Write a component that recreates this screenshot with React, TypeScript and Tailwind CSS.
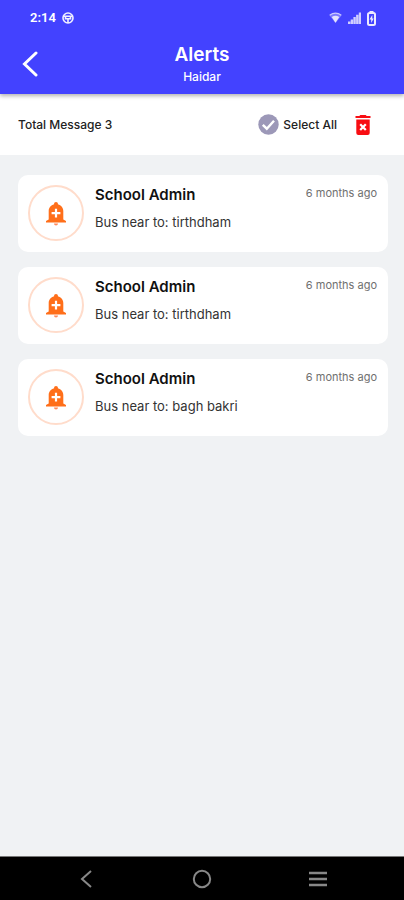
import React, { useState } from 'react';

interface AlertItem {
  id: number;
  sender: string;
  message: string;
  time: string;
}

const initialAlerts: AlertItem[] = [
  { id: 1, sender: 'School Admin', message: 'Bus near to: tirthdham', time: '6 months ago' },
  { id: 2, sender: 'School Admin', message: 'Bus near to: tirthdham', time: '6 months ago' },
  { id: 3, sender: 'School Admin', message: 'Bus near to: bagh bakri', time: '6 months ago' },
];

const BellPlusIcon = () => (
  <svg viewBox="0 0 20 24" className="h-6 w-5" aria-hidden="true">
    <path
      fill="#ff6f1a"
      d="M10 0c1.100 0 1.900 0.800 1.900 1.800v0.400c3.300 0.800 5.400 3.500 5.400 6.800v8.500l2.700 1.500v1.500H0V19l2.700-1.500V9c0-3.300 2.100-6 5.400-6.800V1.800C8.100 0.800 8.900 0 10 0z"
    />
    <path fill="#ff8a5c" d="M8 21.500h4c0 1.200-0.900 2-2 2s-2-0.800-2-2z" />
    <path d="M10 6.800v8.800M5.600 11.200h8.800" stroke="#fff" strokeWidth="2.200" />
  </svg>
);

const TrashIcon = () => (
  <svg viewBox="0 0 16 20" className="h-5 w-4" aria-hidden="true">
    <path fill="#f80d12" d="M5.300 0h5.400l1 1H15.500v2H0.500V1h3.800zM1.300 4.500h13.400V18a2 2 0 0 1-2 2H3.300a2 2 0 0 1-2-2z" />
    <path d="M5.200 9.200l5.600 5.900M10.800 9.200l-5.600 5.900" stroke="#fff" strokeWidth="2.200" />
  </svg>
);

const StatusBar = () => (
  <div className="flex h-9 items-center justify-between pr-7 pl-[30px] text-white">
    <div className="flex items-center gap-[6px]">
      <span className="font-[Roboto,sans-serif] text-[13px] leading-5 font-semibold">2:14</span>
      <svg viewBox="0 0 12 12" className="h-3 w-3" fill="none" stroke="#f1f0ff" strokeWidth="1.600" aria-hidden="true">
        <circle cx="6" cy="6" r="5" />
        <path d="M1.500 4.200h9M3.500 4.500v2.300h5V4.500M6 7v4" />
      </svg>
    </div>
    <div className="flex items-center gap-[6px]">
      <svg viewBox="0 0 13 12" className="h-3 w-[13px]" aria-hidden="true">
        <path d="M0.500 3.500Q6.500-1.300 12.500 3.500L6.500 11z" fill="#7b79ff" />
        <path d="M0.700 3.300Q6.500-1 12.300 3.300" fill="none" stroke="#c9c8ff" strokeWidth="1.200" />
        <path d="M2.700 5Q6.500 2.500 10.300 5L6.500 10.800z" fill="#e4e3ff" />
      </svg>
      <svg viewBox="0 0 13 12" className="h-3 w-[13px]" fill="#cfceff" aria-hidden="true">
        <path d="M0 9.500h2.400V12H0zM2.700 7.500h2.400V12H2.700zM5.400 5h2.400v7H5.400zM8.100 2.700h2.400V12H8.100zM10.800 0.500H13V12h-2.200z" />
      </svg>
      <svg viewBox="0 0 9 15" className="h-[15px] w-[9px]" aria-hidden="true">
        <path d="M2.500 0h4v1.500h-4z" fill="#eceaff" />
        <rect x="1" y="2" width="7" height="12" rx="1.500" fill="none" stroke="#eceaff" strokeWidth="2" />
        <path d="M5.300 4L2.500 8.500h1.700V12l2.500-4.500H5.300z" fill="#eceaff" />
      </svg>
    </div>
  </div>
);

const AlertCard = ({ alert }: { alert: AlertItem }) => (
  <li className="flex items-start gap-[11px] rounded-[10px] bg-white pt-[10px] pr-[11px] pb-[11px] pl-[10px]">
    <div className="flex h-14 w-14 shrink-0 items-center justify-center rounded-full border-2 border-[#ffdccb] pt-0.5">
      <BellPlusIcon />
    </div>
    <div className="min-w-0 flex-1">
      <div className="flex items-start justify-between">
        <h2 className="text-[15px] leading-5 font-semibold text-[#111]">{alert.sender}</h2>
        <time className="text-[11px] leading-4 text-[#707070]">{alert.time}</time>
      </div>
      <p className="mt-2 text-[13px] leading-[18px] text-[#333]">{alert.message}</p>
    </div>
  </li>
);

const App: React.FC = () => {
  const [alerts, setAlerts] = useState<AlertItem[]>(initialAlerts);
  const [allSelected, setAllSelected] = useState(false);

  const handleDelete = () => {
    if (allSelected) {
      setAlerts([]);
      setAllSelected(false);
    }
  };

  return (
    <div className="flex min-h-screen flex-col bg-[#f0f2f4] font-[Inter,sans-serif]">
      <header className="relative z-10 bg-[#4342ff] pb-2 shadow-[0_2px_4px_rgba(0,0,0,0.3)]">
        <StatusBar />
        <div className="grid grid-cols-[60px_1fr_60px] items-center pt-1.5 text-white">
          <button type="button" aria-label="Back" className="flex h-10 cursor-pointer items-center pl-[22px]">
            <svg viewBox="0 0 16 26" className="h-[26px] w-4" fill="none" aria-hidden="true">
              <path d="M14 2L2.500 13L14 24" stroke="#fff" strokeWidth="3" strokeLinecap="round" />
            </svg>
          </button>
          <div className="text-center">
            <h1 className="text-[19px] leading-[26px] font-semibold">Alerts</h1>
            <p className="text-[12px] leading-[18px] font-medium">Haidar</p>
          </div>
        </div>
      </header>

      {/* Toolbar */}
      <div className="flex h-[61px] items-center bg-white pr-[33px] pl-[18px]">
        <p className="text-[12px] leading-4 font-medium text-[#222]">Total Message {alerts.length}</p>
        <label className="ml-auto flex cursor-pointer items-center gap-1 text-[12px] leading-4 font-medium text-[#222]">
          <input
            type="checkbox"
            className="peer sr-only"
            checked={allSelected}
            onChange={(e) => setAllSelected(e.target.checked)}
          />
          <svg viewBox="0 0 21 21" className="h-[21px] w-[21px] text-[#9c98b8] peer-checked:text-[#4342ff]" aria-hidden="true">
            <circle cx="10.500" cy="10.500" r="10.200" fill="currentColor" />
            <path d="M4.800 10.800l4 3.900 7.200-8" fill="none" stroke="#fff" strokeWidth="2.400" />
          </svg>
          Select All
        </label>
        <button type="button" aria-label="Delete" onClick={handleDelete} className="ml-[18px] cursor-pointer">
          <TrashIcon />
        </button>
      </div>

      <main className="flex-1 pt-5 pr-4 pl-[18px]">
        <ul className="flex flex-col gap-[15px]">
          {alerts.map((alert) => (
            <AlertCard key={alert.id} alert={alert} />
          ))}
        </ul>
      </main>

      {/* System navigation */}
      <nav className="grid h-11 grid-cols-[1fr_60px_1fr] items-center border-t border-[#777] bg-black text-[#888]">
        <button type="button" aria-label="System back" className="flex justify-center">
          <svg viewBox="0 0 12 18" className="h-[18px] w-3" fill="none" stroke="currentColor" strokeWidth="2" aria-hidden="true">
            <path d="M11 1L2 9l9 8" />
          </svg>
        </button>
        <button type="button" aria-label="Home" className="flex justify-center">
          <svg viewBox="0 0 20 20" className="h-5 w-5" fill="none" stroke="currentColor" strokeWidth="2" aria-hidden="true">
            <circle cx="10" cy="10" r="8.200" />
          </svg>
        </button>
        <button type="button" aria-label="Recent apps" className="flex justify-center">
          <svg viewBox="0 0 20 18" className="h-[18px] w-5" stroke="currentColor" strokeWidth="2.400" aria-hidden="true">
            <path d="M1 3h18M1 9h18M1 15h18" />
          </svg>
        </button>
      </nav>
    </div>
  );
};

export default App;
